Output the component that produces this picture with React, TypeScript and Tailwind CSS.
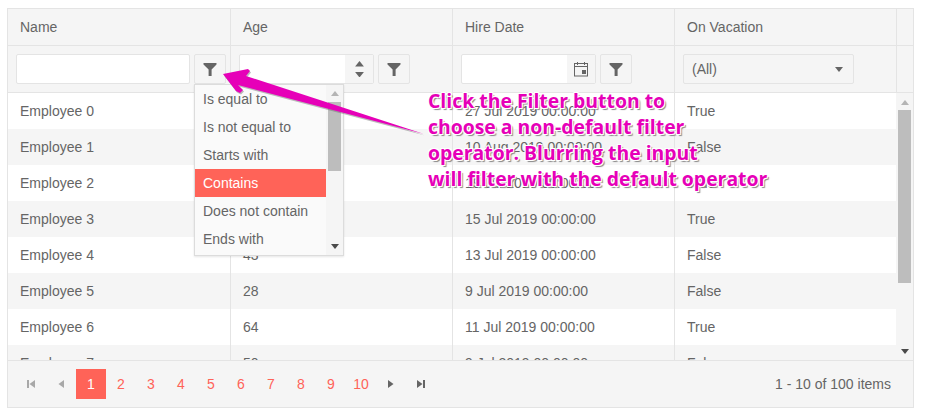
const employees = [
  { name: "Employee 0", age: "33", date: "27 Jul 2019 00:00:00", vacation: "True" },
  { name: "Employee 1", age: "51", date: "10 Aug 2019 00:00:00", vacation: "False" },
  { name: "Employee 2", age: "26", date: "19 Jul 2019 00:00:00", vacation: "True" },
  { name: "Employee 3", age: "37", date: "15 Jul 2019 00:00:00", vacation: "True" },
  { name: "Employee 4", age: "43", date: "13 Jul 2019 00:00:00", vacation: "False" },
  { name: "Employee 5", age: "28", date: "9 Jul 2019 00:00:00", vacation: "False" },
  { name: "Employee 6", age: "64", date: "11 Jul 2019 00:00:00", vacation: "True" },
  { name: "Employee 7", age: "50", date: "9 Jul 2019 00:00:00", vacation: "False" },
]

const operators = ["Is equal to", "Is not equal to", "Starts with", "Contains", "Does not contain", "Ends with"]
const pages = ["1", "2", "3", "4", "5", "6", "7", "8", "9", "10"]

function FunnelIcon() {
  return (
    <svg width="14" height="14" viewBox="0 0 14 14">
      <path d="M0.5 1h13v1.4L8.6 7.4V14H5.6V7.4L0.5 2.4z" fill="#656565" />
    </svg>
  )
}

function FilterButton() {
  return (
    <button className="w-8 h-[30px] shrink-0 flex items-center justify-center bg-[#f5f5f5] border border-[#e4e4e4] rounded-[2px]">
      <FunnelIcon />
    </button>
  )
}

function Triangle({ down, color = "#656565", size = 8 }: { down?: boolean; color?: string; size?: number }) {
  return (
    <svg width={size} height={size / 2 + 1} viewBox="0 0 8 5">
      <path d={down ? "M0 0h8L4 5z" : "M0 5h8L4 0z"} fill={color} />
    </svg>
  )
}

function PagerIcon({ d, color }: { d: string; color: string }) {
  return (
    <svg width="10" height="10" viewBox="0 0 10 10">
      <path d={d} fill={color} />
    </svg>
  )
}

function CalendarIcon() {
  return (
    <svg width="16" height="16" viewBox="0 0 16 16" fill="none" stroke="#656565">
      <rect x="1.5" y="2.5" width="13" height="12.5" />
      <path d="M1.5 5.5h13" />
      <path d="M4.5 1v3M11.5 1v3" />
      <rect x="9" y="9" width="4" height="4" fill="#656565" stroke="none" />
    </svg>
  )
}

export default function App() {
  return (
    <div className="relative w-[927px] h-[415px] overflow-hidden bg-white pl-[7px] pt-2 text-sm text-[#656565] font-['Liberation_Sans',Arial,sans-serif]">
      <div className="w-[907px] h-[400px] border border-[#e4e4e4] flex flex-col">
        {/* Header */}
        <div className="flex h-[37px] shrink-0 bg-[#f5f5f5] border-b border-[#e4e4e4] pr-4">
          {["Name", "Age", "Hire Date", "On Vacation"].map((title, i) => (
            <div
              key={title}
              className={`${i === 0 ? "w-[223px]" : "w-[222px]"} border-r border-[#e4e4e4] pl-3 flex items-center`}
            >
              {title}
            </div>
          ))}
        </div>

        {/* Filter row */}
        <div className="flex h-[47px] shrink-0 bg-[#f5f5f5] border-b border-[#e4e4e4]">
          <div className="w-[223px] border-r border-[#e4e4e4] pl-2 pt-2 flex gap-1">
            <div className="w-[174px] h-[30px] bg-white border border-[#e4e4e4] rounded-[2px]" />
            <FilterButton />
          </div>
          <div className="w-[222px] border-r border-[#e4e4e4] pl-2 pt-2 flex gap-1">
            <div className="w-[135px] h-[30px] flex bg-white border border-[#e4e4e4] rounded-[2px]">
              <div className="flex-1" />
              <div className="w-7 bg-[#f5f5f5] flex flex-col items-center justify-center gap-[5px]">
                <Triangle size={9} />
                <Triangle size={9} down />
              </div>
            </div>
            <FilterButton />
          </div>
          <div className="w-[222px] border-r border-[#e4e4e4] pl-2 pt-2 flex gap-1">
            <div className="w-[135px] h-[30px] flex bg-white border border-[#e4e4e4] rounded-[2px]">
              <div className="flex-1" />
              <div className="w-7 bg-[#f5f5f5] flex items-center justify-center">
                <CalendarIcon />
              </div>
            </div>
            <FilterButton />
          </div>
          <div className="w-[222px] border-r border-[#e4e4e4] pl-2 pt-2">
            <div className="w-[171px] h-[30px] flex items-center justify-between pl-2 pr-[10px] bg-[#f5f5f5] border border-[#e4e4e4] rounded-[2px]">
              <span>(All)</span>
              <Triangle size={8} down />
            </div>
          </div>
        </div>

        {/* Body */}
        <div className="flex flex-1 min-h-0">
          <div className="w-[888px] overflow-hidden">
            {employees.map((emp, i) => (
              <div key={emp.name} className={`flex h-9 ${i % 2 === 1 ? "bg-[#f5f5f5]" : "bg-white"}`}>
                <div className="w-[223px] shrink-0 border-r border-[#e4e4e4] pl-3 flex items-center">{emp.name}</div>
                <div className="w-[222px] shrink-0 border-r border-[#e4e4e4] pl-3 flex items-center">{emp.age}</div>
                <div className="w-[222px] shrink-0 border-r border-[#e4e4e4] pl-3 flex items-center">{emp.date}</div>
                <div className="w-[221px] shrink-0 pl-3 flex items-center">{emp.vacation}</div>
              </div>
            ))}
          </div>
          <div className="w-[17px] bg-[#f5f5f5] flex flex-col items-center">
            <div className="h-[17px] flex items-center justify-center pt-px">
              <Triangle color="#b4b4b4" />
            </div>
            <div className="w-[13px] h-[173px] bg-[#bdbdbd]" />
            <div className="flex-1" />
            <div className="h-[17px] flex items-center justify-center">
              <Triangle down color="#4a4a4a" />
            </div>
          </div>
        </div>

        {/* Pager */}
        <div className="h-[47px] shrink-0 bg-[#f5f5f5] border-t border-[#e4e4e4] flex items-center pl-2 pr-[22px]">
          <div className="w-[30px] flex justify-center">
            <PagerIcon d="M1 1h2v8H1zM9 1v8L3.5 5z" color="#a8a8a8" />
          </div>
          <div className="w-[30px] flex justify-center">
            <PagerIcon d="M8 1v8L2.5 5z" color="#a8a8a8" />
          </div>
          {pages.map((page, i) => (
            <div
              key={page}
              className={`w-[30px] h-[30px] flex items-center justify-center ${
                i === 0 ? "bg-[#ff6358] text-white" : "text-[#ff6358]"
              }`}
            >
              {page}
            </div>
          ))}
          <div className="w-[30px] flex justify-center">
            <PagerIcon d="M2 1v8L7.5 5z" color="#656565" />
          </div>
          <div className="w-[30px] flex justify-center">
            <PagerIcon d="M1 1v8L6.5 5zM7 1h2v8H7z" color="#656565" />
          </div>
          <div className="ml-auto">1 - 10 of 100 items</div>
        </div>
      </div>

      {/* Operator dropdown */}
      <div className="absolute left-[194px] top-[84px] w-[150px] h-[172px] flex bg-[#fafafa] border border-[#dcdcdc] shadow-[0_1px_2px_rgba(0,0,0,0.1)]">
        <div className="w-[131px]">
          {operators.map((op) => (
            <div
              key={op}
              className={`h-7 pl-2 flex items-center ${op === "Contains" ? "bg-[#ff6358] text-white" : ""}`}
            >
              {op}
            </div>
          ))}
        </div>
        <div className="flex-1 bg-[#f5f5f5] flex flex-col items-center">
          <div className="h-[17px] flex items-center justify-center">
            <Triangle color="#b4b4b4" />
          </div>
          <div className="w-[13px] h-[69px] bg-[#bdbdbd]" />
          <div className="flex-1" />
          <div className="h-[17px] flex items-center justify-center">
            <Triangle down color="#4a4a4a" />
          </div>
        </div>
      </div>

      {/* Annotation arrow */}
      <svg className="absolute left-0 top-0" width="927" height="415" viewBox="0 0 927 415">
        <polygon
          points="223,74 248,69 250,71 246,76 424,134 238,85 243,90 240,93 236,91"
          fill="#6b6b6b"
          opacity="0.45"
          transform="translate(1,1.5)"
        />
        <polygon points="223,74 248,69 250,71 246,76 424,134 238,85 243,90 240,93 236,91" fill="#e600b8" />
      </svg>

      {/* Annotation text */}
      <div className="absolute left-[428px] top-[88px] text-[19.4px] leading-[26px] font-bold whitespace-nowrap text-[#e600b8] font-['Open_Sans',sans-serif] [text-shadow:1px_1px_0_#fff,-1px_-1px_0_#fff,1px_-1px_0_#fff,-1px_1px_0_#fff,2px_2px_1px_#888]">
        <div>Click the Filter button to</div>
        <div>choose a non-default filter</div>
        <div>operator. Blurring the input</div>
        <div>will filter with the default operator</div>
      </div>
    </div>
  )
}
